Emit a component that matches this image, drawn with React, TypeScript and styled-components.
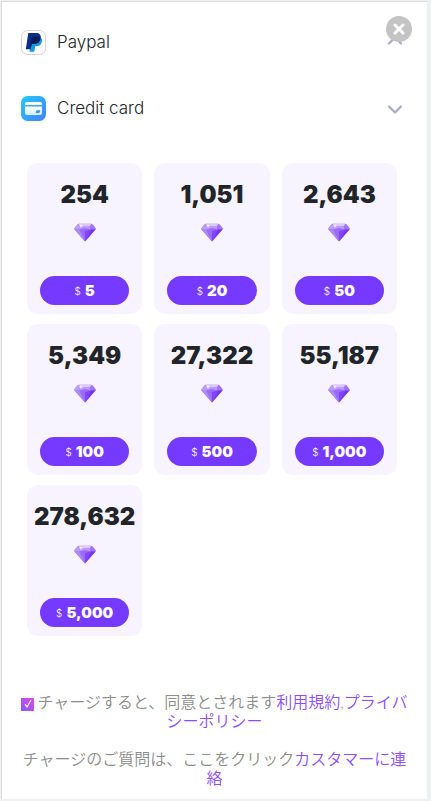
import React, { useState } from "react";
import styled, { createGlobalStyle } from "styled-components";

const GlobalStyle = createGlobalStyle`
  *, *::before, *::after { box-sizing: border-box; }
  body {
    margin: 0;
    background: #eff0f1;
    color: #212529;
    font-family: Inter, "Noto Sans CJK JP", sans-serif;
  }
  button { font: inherit; color: inherit; border: 0; cursor: pointer; }
`;

const Page = styled.div`
  min-height: 100vh;
  padding: 1px 4px 2px 1px;
  display: flex;
`;

const Panel = styled.main`
  position: relative;
  flex: 1;
  min-width: 0;
  padding: 7px 0 11px;
  background: #fff;
  border: solid #dcdcdc;
  border-width: 1px 0 0 1px;
`;

const CloseButton = styled.button`
  position: absolute;
  top: 14px;
  right: 15px;
  width: 26px;
  height: 26px;
  padding: 0;
  border-radius: 50%;
  background: #c4c4c4;
  display: grid;
  place-items: center;
`;

const Method = styled.button`
  width: 100%;
  height: 66px;
  padding: 0 24px 0 19px;
  display: flex;
  align-items: center;
  gap: 11px;
  background: none;
  text-align: left;
`;

const MethodName = styled.span`
  flex: 1;
  font-size: 17px;
  line-height: 24px;
  font-weight: 300;
`;

const Packages = styled.section`
  display: grid;
  grid-template-columns: repeat(3, minmax(0, 1fr));
  gap: 10px 12px;
  padding: 22px 30px 0 25px;
`;

const Card = styled.article`
  height: 151px;
  padding: 17px 13px 9px;
  border-radius: 11px;
  background: #f7f4ff;
  display: flex;
  flex-direction: column;
  align-items: center;
`;

const Amount = styled.strong`
  font-size: 24px;
  line-height: 30px;
  font-weight: 900;
  white-space: nowrap;
`;

const Gem = styled.svg`
  width: 22px;
  height: 19px;
  margin-top: 13px;
`;

const PriceButton = styled.button`
  width: 100%;
  height: 29px;
  margin-top: auto;
  padding: 0;
  border-radius: 15px;
  background: #7639ff;
  display: flex;
  align-items: center;
  justify-content: center;
  gap: 4px;
`;

const Currency = styled.span`
  color: #fff;
  font-size: 10px;
  font-weight: 300;
`;

const Price = styled.span`
  color: #fff;
  font-size: 15px;
  font-weight: 900;
`;

const Notes = styled.footer`
  padding: 56px 16px 0;
  display: flex;
  flex-direction: column;
  gap: 19px;
  color: #8c8c8c;
  font-family: Lato, "Noto Sans CJK JP", sans-serif;
  font-size: 16px;
  line-height: 19px;
  font-weight: 350;
  text-align: center;
`;

const Note = styled.p`
  margin: 0;
`;

const NoteLink = styled.a`
  color: #8a4dff;
  text-decoration: none;
`;

const Agree = styled.input`
  appearance: none;
  width: 13px;
  height: 13px;
  margin: 0 3px 0 0;
  vertical-align: -3px;
  background: linear-gradient(45deg, #8b55f5, #dd4ee0);
  &:checked {
    background:
      url("data:image/svg+xml,%3Csvg xmlns='http://www.w3.org/2000/svg' viewBox='0 0 13 13'%3E%3Cpath d='M4 6.2l2 2.7 4-7' fill='none' stroke='white' stroke-width='1.1'/%3E%3C/svg%3E"),
      linear-gradient(45deg, #8b55f5, #dd4ee0);
  }
`;

const PaypalIcon = () => (
  <svg width="25" height="25" viewBox="0 0 25 25" aria-hidden="true">
    <rect x=".5" y=".5" width="24" height="24" rx="6" fill="#fff" stroke="#d4d4d8" />
    <path d="M10 7h8.4c2.3.8 3 2.5 2.5 4.7-.7 3-2.7 4.5-5.5 4.5h-1.2l-.9 5.6H8.5z" fill="#119bdd" />
    <path d="M7.3 3h7.6c3.7 0 5.4 2 4.7 5.3-.7 3.9-3 5.6-6.4 5.6h-2.6l-.9 5.3H4.8z" fill="#08308a" />
    <path d="M10.5 7.2q-.3-.7 1-.7h6.4l1.6.9c-.2 4.4-2.8 6.5-6.3 6.5h-2.6l-.4 2.5H9z" fill="#061c5c" />
  </svg>
);

const CardIcon = () => (
  <svg width="25" height="25" viewBox="0 0 25 25" aria-hidden="true">
    <defs>
      <linearGradient id="cardBack" x1="0" y1="0" x2="1" y2="1">
        <stop offset="0" stopColor="#21cbff" />
        <stop offset="1" stopColor="#4580ff" />
      </linearGradient>
      <linearGradient id="cardFace" x1="0" y1="0" x2="0" y2="1">
        <stop offset="0" stopColor="#fff" />
        <stop offset="1" stopColor="#d3ecff" />
      </linearGradient>
    </defs>
    <rect width="25" height="25" rx="6.5" fill="url(#cardBack)" />
    <path d="M4 9V8a2 2 0 0 1 2-2h13a2 2 0 0 1 2 2v1z" fill="#fff" />
    <path d="M4 10.4h17V17a2 2 0 0 1-2 2H6a2 2 0 0 1-2-2z" fill="url(#cardFace)" />
    <path d="M15.8 14.3h3.5l-.8 2.2q-.2.5-.7.5h-3.2l.7-2.1q.1-.6.5-.6z" fill="#2998f3" />
  </svg>
);

const Chevron = ({ up }: { up: boolean }) => (
  <svg
    width="16"
    height="12"
    viewBox="0 0 16 12"
    fill="none"
    stroke="#aaa9cb"
    strokeWidth="2.3"
    strokeLinecap="round"
    strokeLinejoin="round"
    aria-hidden="true"
  >
    <path d={up ? "M2 7.5L8 1.5l6 6" : "M2 4.5l6 6 6-6"} />
  </svg>
);

const Diamond = () => (
  <Gem viewBox="0 0 22 19" aria-hidden="true">
    <path d="M5 .8h12q1 0 1.6.8L21.5 5q.6.8 0 1.6L11.7 18q-.7.8-1.4 0L.5 6.6q-.6-.8 0-1.6L3.4 1.6Q4 .8 5 .8z" fill="#a477ff" />
    <path d="M4.5.8h13l-1.700 2.600H6z" fill="#dac9fd" />
    <path d="M4 1L.3 5.8l5.200.6L6 3.4z" fill="#b79ff5" />
    <path d="M6 3.4h9.8l1 3.2H5.3z" fill="#bd97ff" />
    <path d="M18 1l3.7 4.8-4.9.8-1-3.2z" fill="#a172fb" />
    <path d="M.3 6.3l5 .3L11 18.3z" fill="#a98df0" />
    <path d="M5.3 6.600L11 5l5.8 1.600L11 18.3z" fill="#9b6cfa" />
    <path d="M11 8v10.3l5.8-11.7z" fill="#8443ff" />
    <path d="M16.8 6.6l4.9-.3L11 18.3z" fill="#7434f5" />
    <path d="M7 1.5v3M5.5 3h3" stroke="#fff" strokeWidth=".8" />
  </Gem>
);

const packages = [
  { amount: "254", price: "5" },
  { amount: "1,051", price: "20" },
  { amount: "2,643", price: "50" },
  { amount: "5,349", price: "100" },
  { amount: "27,322", price: "500" },
  { amount: "55,187", price: "1,000" },
  { amount: "278,632", price: "5,000" },
];

export default function App() {
  const [agreed, setAgreed] = useState(true);
  return (
    <>
      <GlobalStyle />
      <Page>
        <Panel>
          <Method type="button">
            <PaypalIcon />
            <MethodName>Paypal</MethodName>
            <Chevron up />
          </Method>
          <Method type="button">
            <CardIcon />
            <MethodName>Credit card</MethodName>
            <Chevron up={false} />
          </Method>
          <Packages>
            {packages.map(({ amount, price }) => (
              <Card key={amount}>
                <Amount>{amount}</Amount>
                <Diamond />
                <PriceButton type="button">
                  <Currency>$</Currency>
                  <Price>{price}</Price>
                </PriceButton>
              </Card>
            ))}
          </Packages>
          <Notes>
            <Note>
              <Agree id="agree" type="checkbox" checked={agreed} onChange={(e) => setAgreed(e.target.checked)} />
              <label htmlFor="agree">チャージすると、同意とされます</label>
              <NoteLink href="#terms">利用規約</NoteLink>,<NoteLink href="#privacy">プライバシーポリシー</NoteLink>
            </Note>
            <Note>
              チャージのご質問は、ここをクリック<NoteLink href="#support">カスタマーに連絡</NoteLink>
            </Note>
          </Notes>
          <CloseButton type="button" aria-label="Close">
            <svg width="12" height="12" viewBox="0 0 12 12" stroke="#fff" strokeWidth="3" strokeLinecap="round" aria-hidden="true">
              <path d="M2 2l8 8M10 2l-8 8" />
            </svg>
          </CloseButton>
        </Panel>
      </Page>
    </>
  );
}
